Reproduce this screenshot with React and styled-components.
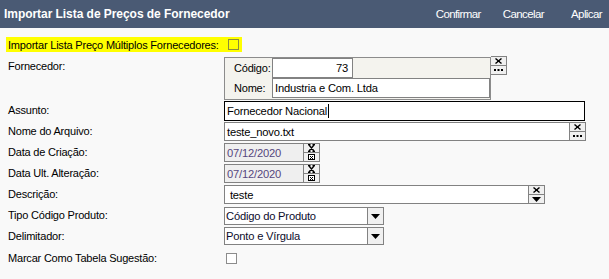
import React from 'react'
import styled, { createGlobalStyle } from 'styled-components'

const GlobalStyle = createGlobalStyle`
  body {
    margin: 0;
    background: #f9f9f9;
    font-family: "Liberation Sans", Arial, sans-serif;
    color: #000;
  }
`;

const Page = styled.div`
  width: 609px;
  height: 279px;
  overflow: hidden;
  background: #f9f9f9;
`;

const Header = styled.header`
  height: 28px;
  background: #4a5a74;
  display: flex;
  align-items: center;
  justify-content: space-between;
  padding: 0 7px 0 4px;
  box-sizing: border-box;
  color: #fff;
`;

const Title = styled.h1`
  margin: 0;
  font-size: 12px;
  font-weight: bold;
  letter-spacing: -0.05px;
`;

const Actions = styled.nav`
  display: flex;
  align-items: center;
  gap: 22px;
`;

const ActionButton = styled.button`
  background: none;
  border: 0;
  padding: 0;
  margin-left: ${p => p.$extra || 0}px;
  color: #fff;
  font-family: "Liberation Sans", Arial, sans-serif;
  font-size: 11.5px;
  letter-spacing: -0.6px;
  cursor: pointer;
`;

const Form = styled.div`
  padding-top: 9px;
  font-size: 11px;
  letter-spacing: -0.2px;
`;

const Highlight = styled.div`
  display: inline-flex;
  align-items: center;
  gap: 9px;
  margin-left: 6px;
  height: 15px;
  padding: 0 3px 0 2px;
  background: #ffff00;
`;

const Check = styled.span`
  display: inline-block;
  width: 11px;
  height: 11px;
  margin-left: ${p => p.$ml || 0}px;
  box-sizing: border-box;
  border: 1px solid ${p => (p.$onYellow ? '#8c8c3a' : '#8c8c8c')};
  background: ${p => (p.$onYellow ? 'transparent' : '#fff')};
`;

const Row = styled.div`
  display: flex;
  align-items: flex-start;
  height: ${p => p.$h || 21}px;
  padding-top: ${p => p.$pt || 0}px;
  box-sizing: border-box;
`;

const Label = styled.label`
  width: 224px;
  flex: none;
  padding-left: 8px;
  box-sizing: border-box;
  margin-top: ${p => p.$mt || 0}px;
`;

const Field = styled.div`
  display: flex;
  align-items: stretch;
  margin-top: ${p => p.$mt || 0}px;
`;

const Box = styled.div`
  width: ${p => p.$w}px;
  height: ${p => p.$h || 19}px;
  box-sizing: border-box;
  border: 1px solid ${p => (p.$focus ? '#000' : '#828282')};
  background: ${p => (p.$disabled ? '#efefef' : '#fff')};
  color: ${p => (p.$disabled ? '#56477e' : '#000')};
  display: flex;
  align-items: center;
  justify-content: ${p => (p.$right ? 'flex-end' : 'flex-start')};
  padding: ${p => (p.$right ? '0 4px 0 2px' : '0 2px')};
  font-size: 11.2px;
  letter-spacing: -0.2px;
  white-space: nowrap;
  overflow: hidden;
`;

const Caret = styled.span`
  display: inline-block;
  width: 1px;
  height: 14px;
  background: #000;
  margin-left: 1px;
`;

const Group = styled.div`
  width: 267px;
  height: 43px;
  margin-top: 1px;
  box-sizing: border-box;
  border: 1px solid #8c8c8c;
  background: #f4f3ee;
  display: grid;
  grid-template-columns: 47px auto;
  grid-auto-rows: 20px;
  align-items: center;
  font-size: 11px;
`;

const GroupLabel = styled.span`
  padding-left: 9px;
  white-space: nowrap;
`;

const ButtonStack = styled.div`
  display: flex;
  flex-direction: column;
  flex: none;
  width: 16px;
  height: ${p => p.$h || 19}px;
`;

const MiniButton = styled.button`
  flex: 1;
  padding: 0;
  margin: 0;
  box-sizing: border-box;
  border: 1px solid #828282;
  border-top-width: ${p => (p.$second ? 0 : 1)}px;
  border-left-width: 0;
  background: #f0f0f0;
  display: flex;
  align-items: center;
  justify-content: center;
  cursor: pointer;
`;

const Select = styled.div`
  width: 160px;
  height: 18px;
  box-sizing: border-box;
  border: 1px solid #828282;
  background: #fff;
  display: flex;
  font-size: 11.2px;
  letter-spacing: -0.2px;
`;

const SelectValue = styled.span`
  flex: 1;
  display: flex;
  align-items: center;
  padding-left: 1px;
  color: #0c0c2c;
`;

const SelectArrow = styled.span`
  width: 15px;
  border-left: 1px solid #828282;
  background: #f0f0f0;
  display: flex;
  align-items: center;
  justify-content: center;
`;

const XIcon = ({ big }) =>
  big ? (
    <svg width="9" height="8" viewBox="0 0 9 8">
      <path d="M1 0.5h2.5M5.5 0.5H8M1 7.5h2.5M5.5 7.5H8M2 1l5 6M7 1L2 7" stroke="#000" strokeWidth="1.3" fill="none" />
    </svg>
  ) : (
    <svg width="7" height="6" viewBox="0 0 7 6">
      <path d="M0.5 0.5l6 5M6.5 0.5l-6 5M2 3h3" stroke="#000" strokeWidth="1.4" fill="none" />
    </svg>
  );

const DotsIcon = () => (
  <svg width="9" height="3" viewBox="0 0 9 3">
    <rect x="0" y="0" width="2" height="2" fill="#000" />
    <rect x="3.5" y="0" width="2" height="2" fill="#000" />
    <rect x="7" y="0" width="2" height="2" fill="#000" />
  </svg>
);

const DownIcon = () => (
  <svg width="9" height="5" viewBox="0 0 9 5">
    <path d="M0 0h9L4.5 5z" fill="#000" />
  </svg>
);

const CalendarIcon = () => (
  <svg width="7" height="6" viewBox="0 0 7 6">
    <rect x="0.5" y="0.5" width="6" height="5" fill="#fff" stroke="#000" />
    <rect x="2" y="2" width="1" height="1" fill="#000" />
    <rect x="4" y="2" width="1" height="1" fill="#000" />
    <rect x="3" y="3" width="1" height="1" fill="#000" />
    <rect x="2" y="4" width="1" height="1" fill="#000" />
    <rect x="4" y="4" width="1" height="1" fill="#000" />
  </svg>
);

const SideButtons = ({ bottom, h }) => (
  <ButtonStack $h={h}>
    <MiniButton><XIcon big={bottom === 'calendar'} /></MiniButton>
    <MiniButton $second>
      {bottom === 'dots' && <DotsIcon />}
      {bottom === 'down' && <DownIcon />}
      {bottom === 'calendar' && <CalendarIcon />}
    </MiniButton>
  </ButtonStack>
);

const Dropdown = ({ value }) => (
  <Select>
    <SelectValue>{value}</SelectValue>
    <SelectArrow><DownIcon /></SelectArrow>
  </Select>
);

export default function App() {
  return (
    <Page>
      <GlobalStyle />
      <Header>
        <Title>Importar Lista de Preços de Fornecedor</Title>
        <Actions>
          <ActionButton>Confirmar</ActionButton>
          <ActionButton>Cancelar</ActionButton>
          <ActionButton $extra={5}>Aplicar</ActionButton>
        </Actions>
      </Header>

      <Form>
        <Highlight>
          <span>Importar Lista Preço Múltiplos Fornecedores:</span>
          <Check $onYellow />
        </Highlight>

        <Row $h={49} $pt={4}>
          <Label $mt={4}>Fornecedor:</Label>
          <Group>
            <GroupLabel>Código:</GroupLabel>
            <Box $w={81} $h={20} $right>73</Box>
            <GroupLabel>Nome:</GroupLabel>
            <Box $w={218} $h={20}>Industria e Com. Ltda</Box>
          </Group>
          <SideButtons bottom="dots" h={19} />
        </Row>

        <Row>
          <Label $mt={3}>Assunto:</Label>
          <Box $w={361} $h={20} $focus>Fornecedor Nacional<Caret /></Box>
        </Row>

        <Row>
          <Label $mt={3}>Nome do Arquivo:</Label>
          <Field>
            <Box $w={346} $h={19}>teste_novo.txt</Box>
            <SideButtons bottom="dots" h={19} />
          </Field>
        </Row>

        <Row>
          <Label $mt={3}>Data de Criação:</Label>
          <Field>
            <Box $w={80} $h={19} $disabled>07/12/2020</Box>
            <SideButtons bottom="calendar" h={19} />
          </Field>
        </Row>

        <Row>
          <Label $mt={3}>Data Ult. Alteração:</Label>
          <Field>
            <Box $w={80} $h={19} $disabled>07/12/2020</Box>
            <SideButtons bottom="calendar" h={19} />
          </Field>
        </Row>

        <Row>
          <Label $mt={3}>Descrição:</Label>
          <Field>
            <Box $w={305} $h={19}>&nbsp;teste</Box>
            <SideButtons bottom="down" h={19} />
          </Field>
        </Row>

        <Row>
          <Label $mt={3}>Tipo Código Produto:</Label>
          <Field $mt={1}>
            <Dropdown value="Código do Produto" />
          </Field>
        </Row>

        <Row>
          <Label $mt={3}>Delimitador:</Label>
          <Field>
            <Dropdown value="Ponto e Vírgula" />
          </Field>
        </Row>

        <Row>
          <Label $mt={4}>Marcar Como Tabela Sugestão:</Label>
          <Field $mt={5}>
            <Check $ml={2} />
          </Field>
        </Row>
      </Form>
    </Page>
  );
}
